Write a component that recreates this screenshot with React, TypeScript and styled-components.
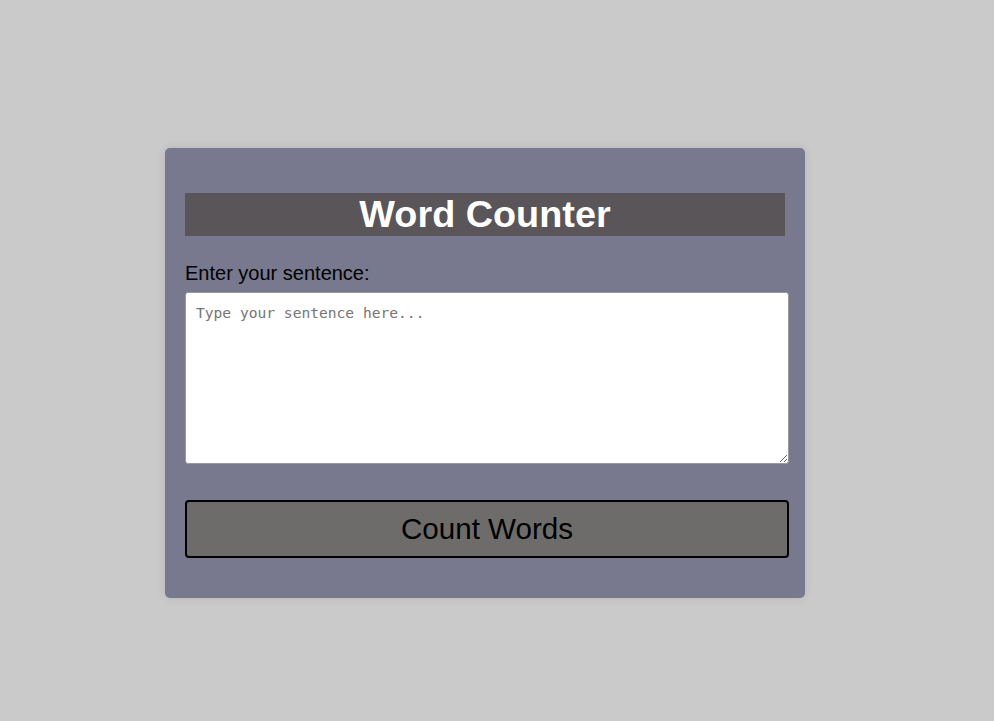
import React, { useState } from "react";
import styled, { createGlobalStyle } from "styled-components";

const Global = createGlobalStyle`
  html, body {
    margin: 0;
    padding: 0;
    background: #cacaca;
    font-family: "Liberation Sans", Arial, sans-serif;
  }
`;

const Page = styled.div`
  min-height: 721px;
  padding: 148px 0 0 165px;
  box-sizing: border-box;
`;

const Card = styled.div`
  width: 640px;
  height: 450px;
  box-sizing: border-box;
  background: #78788e;
  border-radius: 5px;
  padding: 20px;
  box-shadow: 0 0 10px rgba(0, 0, 0, 0.1);
  display: flex;
  flex-direction: column;
`;

const Title = styled.h1`
  margin: 25px 0 25px;
  width: 600px;
  height: 43px;
  background: #5a5559;
  color: #ffffff;
  font-size: 37.8px;
  line-height: 43px;
  font-weight: bold;
  text-align: center;
`;

const Label = styled.label`
  display: block;
  font-size: 20px;
  line-height: 23px;
  color: #000;
  margin-top: 1px;
`;

const TextArea = styled.textarea`
  display: block;
  width: 604px;
  height: 172px;
  box-sizing: border-box;
  margin-top: 7px;
  padding: 11px 10px 10px;
  border: 1px solid #9a9a9a;
  border-radius: 3px;
  background: #fff;
  font-family: "DejaVu Sans Mono", monospace;
  font-size: 14.6px;
  &::placeholder {
    color: #757575;
  }
`;

const Button = styled.button`
  display: block;
  width: 604px;
  height: 58px;
  margin-top: 36px;
  box-sizing: border-box;
  border: 2px solid #000;
  border-radius: 4px;
  background: #6e6c6a;
  color: #000;
  font-family: "Liberation Sans", Arial, sans-serif;
  font-size: 29.6px;
  cursor: pointer;
`;

export default function App() {
  const [text, setText] = useState("");
  return (
    <>
      <Global />
      <Page>
        <Card>
          <Title>Word Counter</Title>
          <Label htmlFor="sentence">Enter your sentence:</Label>
          <TextArea
            id="sentence"
            placeholder="Type your sentence here..."
            value={text}
            onChange={(e) => setText(e.target.value)}
          />
          <Button>Count Words</Button>
        </Card>
      </Page>
    </>
  );
}
